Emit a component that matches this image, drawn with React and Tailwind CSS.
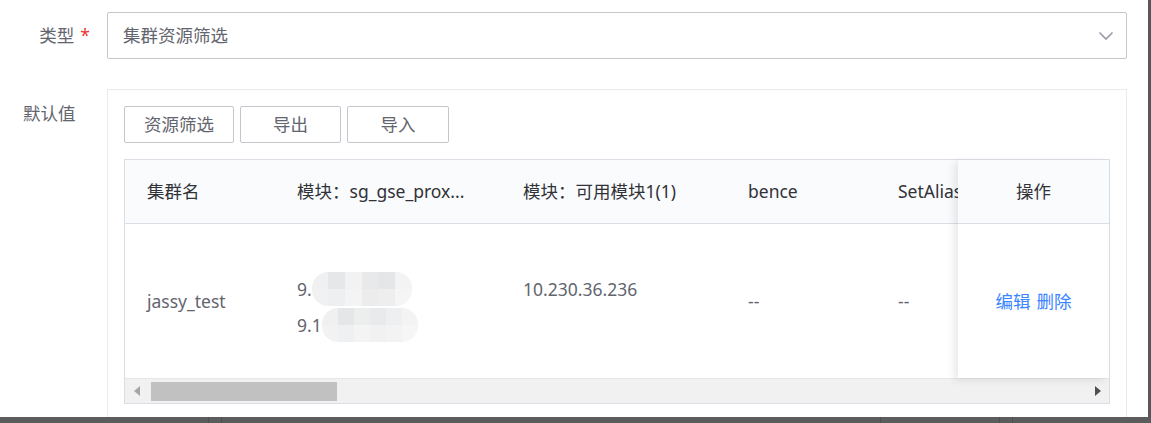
import React from "react";

const mosaicTop = [
  ["bg-[#f0f0f1]", "bg-[#e6e7e8]", "bg-[#f2f2f3]", "bg-[#e8e9ea]", "bg-[#e5e6e7]", "bg-[#f3f3f4]"],
  ["bg-[#f1f1f2]", "bg-[#eeeff0]", "bg-[#f4f4f4]", "bg-[#ececed]", "bg-[#eeeeef]", "bg-[#f5f5f5]"],
];
const mosaicBottom = [
  ["bg-[#f0f0f1]", "bg-[#e5e6e8]", "bg-[#eceded]", "bg-[#e9eaeb]", "bg-[#eeeff0]", "bg-[#f3f3f4]"],
  ["bg-[#f2f2f3]", "bg-[#eff0f1]", "bg-[#f4f4f5]", "bg-[#f1f1f2]", "bg-[#f3f3f3]", "bg-[#f6f6f6]"],
];

function Mosaic({ rows, w }) {
  return (
    <div className={`inline-grid grid-cols-6 grid-rows-2 h-[34px] ${w} rounded-[16px] overflow-hidden align-middle`}>
      {rows.flat().map((c, i) => (
        <div key={i} className={c} />
      ))}
    </div>
  );
}

export default function App() {
  return (
    <div
      className="w-[1151px] h-[423px] bg-white flex flex-col overflow-hidden text-[17.5px] text-[#63656e]"
      style={{ fontFamily: '"Noto Sans", "Noto Sans CJK SC", sans-serif' }}
    >
      <div className="flex h-[417px]">
        <div className="flex-1 flex flex-col pt-[12px]">
          {/* Row 1 */}
          <div className="flex h-[47px]">
            <div className="w-[107px] flex items-center justify-end pr-[17px]">
              <span>类型</span>
              <span className="text-[#ea3636] ml-[6px]">*</span>
            </div>
            <div className="w-[1020px] border border-[#c4c6cc] rounded-[2px] flex items-center justify-between pl-[15px] pr-[12px]">
              <span>集群资源筛选</span>
              <svg width="16" height="10" viewBox="0 0 16 10" fill="none">
                <path d="M1.5 1.5 L8 8 L14.5 1.5" stroke="#979ba5" strokeWidth="1.6" />
              </svg>
            </div>
          </div>

          {/* Row 2 */}
          <div className="flex flex-1 mt-[30px] min-h-0">
            <div className="w-[107px] pl-[23px] pt-[11px]">默认值</div>
            <div className="w-[1020px] border border-[#eaebf0] border-b-0 pt-[16px] pl-[16px]">
              <div className="flex gap-[6px]">
                <div className="w-[110px] h-[37px] border border-[#c4c6cc] rounded-[2px] flex items-center justify-center">资源筛选</div>
                <div className="w-[101px] h-[37px] border border-[#c4c6cc] rounded-[2px] flex items-center justify-center">导出</div>
                <div className="w-[102px] h-[37px] border border-[#c4c6cc] rounded-[2px] flex items-center justify-center">导入</div>
              </div>

              {/* Table */}
              <div className="mt-[16px] w-[986px] border border-[#dcdee5] flex flex-col">
                <div className="flex h-[218px]">
                  <div className="flex-1 overflow-hidden flex flex-col min-w-0">
                    <div className="flex h-[64px] bg-[#fafbfd] border-b border-[#dcdee5] text-[#313238] shrink-0">
                      <div className="w-[150px] shrink-0 pl-[22px] flex items-center">集群名</div>
                      <div className="w-[226px] shrink-0 pl-[22px] flex items-center">模块：sg_gse_prox...</div>
                      <div className="w-[225px] shrink-0 pl-[22px] flex items-center">模块：可用模块1(1)</div>
                      <div className="w-[150px] shrink-0 pl-[22px] flex items-center">bence</div>
                      <div className="w-[150px] shrink-0 pl-[22px] flex items-center whitespace-nowrap">SetAlias</div>
                    </div>
                    <div className="flex flex-1">
                      <div className="w-[150px] shrink-0 pl-[22px] flex items-center">jassy_test</div>
                      <div className="w-[226px] shrink-0 pl-[22px] flex flex-col justify-center pt-[12px]">
                        <div className="h-[36px] flex items-center">
                          <span>9.</span>
                          <Mosaic rows={mosaicTop} w="w-[100px]" />
                        </div>
                        <div className="h-[36px] flex items-center">
                          <span>9.1</span>
                          <Mosaic rows={mosaicBottom} w="w-[96px]" />
                        </div>
                      </div>
                      <div className="w-[225px] shrink-0 pl-[22px] flex flex-col justify-center pt-[12px]">
                        <div className="h-[36px] flex items-center">10.230.36.236</div>
                        <div className="h-[36px]" />
                      </div>
                      <div className="w-[150px] shrink-0 pl-[22px] flex items-center">--</div>
                      <div className="w-[150px] shrink-0 pl-[22px] flex items-center">--</div>
                    </div>
                  </div>
                  <div className="w-[151px] shrink-0 flex flex-col bg-white relative z-10 shadow-[-4px_2px_8px_rgba(0,0,0,0.09)]">
                    <div className="h-[64px] bg-[#fafbfd] border-b border-[#dcdee5] text-[#313238] flex items-center justify-center shrink-0">操作</div>
                    <div className="flex-1 flex items-center justify-center text-[#3a84ff]">
                      <span>编辑</span>
                      <span className="ml-[6px]">删除</span>
                    </div>
                  </div>
                </div>
                {/* Scrollbar */}
                <div className="h-[25px] bg-[#f1f1f1] border-t border-[#e6e6e6] flex items-center">
                  <div className="ml-[9px] w-0 h-0 border-y-[5px] border-y-transparent border-r-[6px] border-r-[#a6a6a6]" />
                  <div className="ml-[11px] w-[186px] h-[19px] bg-[#c1c1c1]" />
                  <div className="flex-1" />
                  <div className="mr-[8px] w-0 h-0 border-y-[5px] border-y-transparent border-l-[6px] border-l-[#505050]" />
                </div>
              </div>
            </div>
          </div>
        </div>
        <div className="w-[3px] bg-[#585858]" />
      </div>
      <div className="h-[6px] bg-[#5c5c5c] flex">
        <div className="w-[208px]" />
        <div className="w-[1px] bg-[#4e4e4e]" />
        <div className="w-[12px]" />
        <div className="w-[1px] bg-[#4e4e4e]" />
        <div className="w-[658px]" />
        <div className="w-[1px] bg-[#4e4e4e]" />
        <div className="w-[118px]" />
        <div className="w-[1px] bg-[#4e4e4e]" />
        <div className="w-[12px]" />
        <div className="w-[1px] bg-[#4e4e4e]" />
      </div>
    </div>
  );
}
